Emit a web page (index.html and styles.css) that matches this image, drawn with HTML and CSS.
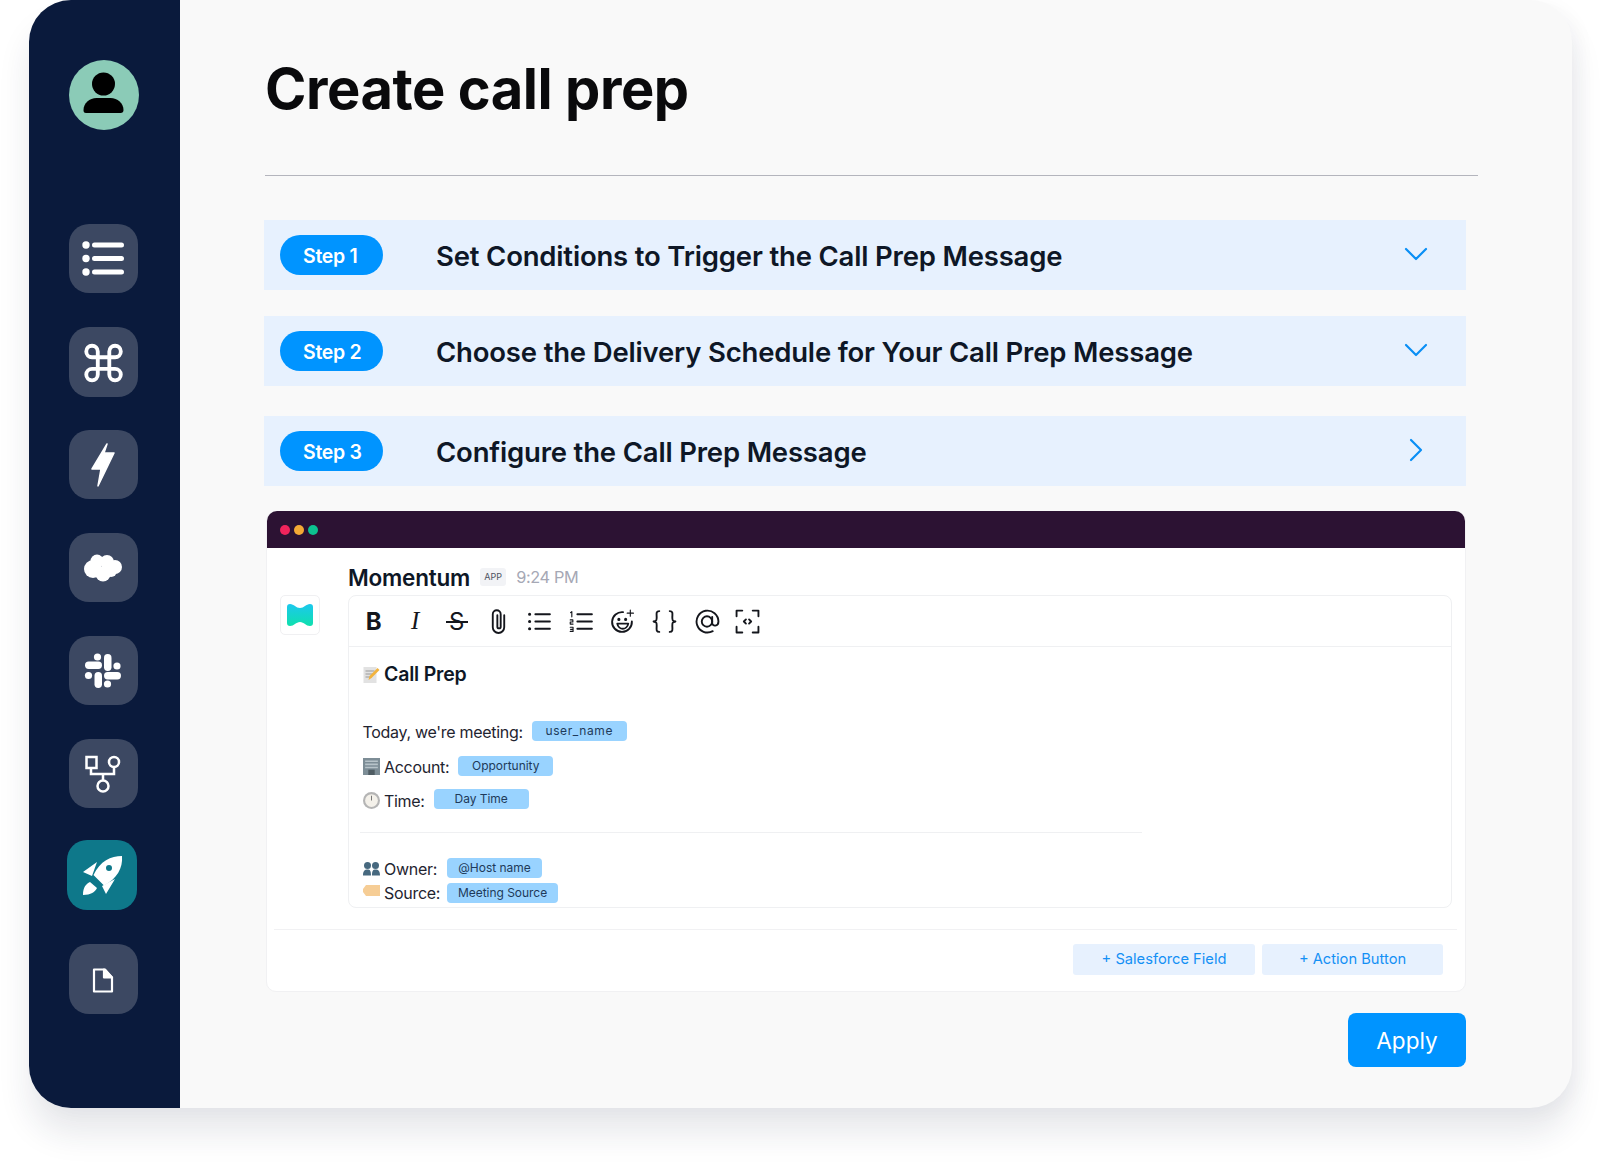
FILE: index.html
```html
<!DOCTYPE html>
<html lang="en">
<head>
<meta charset="utf-8">
<title>Create call prep</title>
<link rel="stylesheet" href="styles.css">
</head>
<body>
<div class="window">
  <aside class="sidebar">
    <svg class="avatar" viewBox="0 0 70 70"><circle cx="35" cy="35" r="35" fill="#8bcbb7"/><circle cx="34.500" cy="24" r="11.500"/><path d="M14.500 50c0-7 6-12 13-12h14c7 0 13 5 13 12 0 2-1 3-3 3H17c-2 0-2.500-1-2.500-3z"/></svg>
    <div class="nav-list">
      <div class="nav"><svg viewBox="0 0 69 69" fill="#fff"><circle cx="17" cy="21" r="3.700"/><circle cx="17" cy="34.500" r="3.700"/><circle cx="17" cy="48" r="3.700"/><path d="M25.500 21h27M25.500 34.500h27M25.500 48h27" stroke="#fff" stroke-width="5" stroke-linecap="round"/></svg></div>
      <div class="nav nav-cmd"><svg viewBox="-11.500 -12.500 69 69" fill="none" stroke="#fff" stroke-width="2" stroke-linecap="round" stroke-linejoin="round"><path transform="scale(1.920)" d="M18 3a3 3 0 0 0-3 3v12a3 3 0 0 0 3 3 3 3 0 0 0 3-3 3 3 0 0 0-3-3H6a3 3 0 0 0-3 3 3 3 0 0 0 3 3 3 3 0 0 0 3-3V6a3 3 0 0 0-3-3 3 3 0 0 0-3 3 3 3 0 0 0 3 3h12a3 3 0 0 0 3-3 3 3 0 0 0-3-3z"/></svg></div>
      <div class="nav"><svg viewBox="0 0 69 69" fill="#fff" stroke="#fff" stroke-width="1.500" stroke-linejoin="round"><path d="M38 14 23 39h9l-3 17 16-33H35z"/></svg></div>
      <div class="nav"><svg viewBox="0 0 69 69" fill="#fff"><circle cx="24" cy="36" r="9"/><circle cx="28" cy="28" r="6.500"/><circle cx="38" cy="29" r="7"/><circle cx="46" cy="34" r="7"/><circle cx="34" cy="41" r="7.500"/><circle cx="42" cy="38" r="6"/></svg></div>
      <div class="nav"><svg viewBox="0 0 69 69" fill="#fff"><rect x="16" y="25.500" width="17" height="7.500" rx="3.700"/><circle cx="28.500" cy="21" r="3.600"/><rect x="35" y="18" width="7.500" height="17" rx="3.700"/><circle cx="48" cy="30" r="3.600"/><rect x="35" y="36" width="17" height="7.500" rx="3.700"/><circle cx="19.500" cy="39.500" r="3.600"/><rect x="25.500" y="36" width="7.500" height="16" rx="3.700"/><circle cx="38.500" cy="48" r="3.600"/></svg></div>
      <div class="nav"><svg viewBox="0 0 69 69" fill="none" stroke="#fff" stroke-width="2.500"><rect x="17.500" y="18" width="10" height="11"/><circle cx="45" cy="23" r="5"/><circle cx="34" cy="47" r="5.500"/><path d="M22 29v6h23v-7M34 35v6.500"/></svg></div>
      <div class="nav nav-active"><svg viewBox="0 0 70 70" fill="#fff"><path fill-rule="evenodd" d="M55 16c-11 0-22 5-28.500 19L37 45.500C50 38.500 56 28 55 16zM45 28a3 3 0 1 0-6 0 3 3 0 0 0 6 0z"/><path d="M16 32l14-10-5 14zM48 39l-9 15-4-8zM16 55c0-8 3-11 7-13l7 6c-2 4-6 7-14 7z"/></svg></div>
      <div class="nav nav-last"><svg viewBox="0 0 69 69" fill="none" stroke="#fff" stroke-width="2.200" stroke-linejoin="round"><path d="M25 25h11l7 8v14H25z"/><path d="M35 25l8 8h-8z" fill="#fff"/></svg></div>
    </div>
  </aside>
  <main class="main">
    <h1 class="title">Create call prep</h1>
    <div class="rule"></div>
    <section class="step step-first">
      <span class="pill">Step 1</span>
      <span class="step-text">Set Conditions to Trigger the Call Prep Message</span>
      <svg class="chev" viewBox="0 0 24 24"><path d="M2 6l10 10L22 6"/></svg>
    </section>
    <section class="step step-second">
      <span class="pill">Step 2</span>
      <span class="step-text">Choose the Delivery Schedule for Your Call Prep Message</span>
      <svg class="chev" viewBox="0 0 24 24"><path d="M2 6l10 10L22 6"/></svg>
    </section>
    <section class="step step-third">
      <span class="pill">Step 3</span>
      <span class="step-text">Configure the Call Prep Message</span>
      <svg class="chev chev-right" viewBox="0 0 24 24"><path d="M7 2l10 10L7 22"/></svg>
    </section>
    <section class="card">
      <div class="titlebar"><i class="dot dot-red"></i><i class="dot dot-yellow"></i><i class="dot dot-green"></i></div>
      <div class="card-body">
        <div class="logo"><svg viewBox="0 0 26 22" width="26" height="22"><defs><linearGradient id="mg" x1="0" y1="0" x2="0" y2="1"><stop offset="0" stop-color="#1cc8ee"/><stop offset="1" stop-color="#0fe0ad"/></linearGradient></defs><path fill="url(#mg)" d="M3 0c4 0 6 4 10 4s6-4 10-4c2 0 3 1 3 3v16c0 2-1 3-3 3-4 0-6-4-10-4s-6 4-10 4c-2 0-3-1-3-3V3c0-2 1-3 3-3z"/></svg></div>
        <div class="message">
          <div class="msg-head"><span class="name">Momentum</span><span class="app">APP</span><span class="time">9:24 PM</span></div>
          <div class="editor">
            <div class="toolbar">
              <span class="tool tool-b">B</span>
              <span class="tool tool-i">I</span>
              <span class="tool tool-s">S</span>
              <span class="tool"><svg viewBox="0 0 24 24" class="ico"><path d="M17.500 6v11.500a5.500 5.500 0 0 1-11 0V5a3.800 3.800 0 0 1 7.600 0v12a1.600 1.600 0 0 1-3.200 0V6"/></svg></span>
              <span class="tool"><svg viewBox="0 0 24 24" class="ico"><path d="M8 5h14M8 12h14M8 19h14"/><path class="dotted" d="M2.500 5h.01M2.500 12h.01M2.500 19h.01"/></svg></span>
              <span class="tool"><svg viewBox="0 0 24 24" class="ico"><path d="M8 5h14M8 12h14M8 19h14"/><path class="thin" d="M1.500 3.500l1.200-1v5M1.200 10.500h2.500v2h-2.500v2h2.700M1.200 17.500h2.700v4h-2.700M1.500 19.500h2.400"/></svg></span>
              <span class="tool"><svg viewBox="0 0 24 24" class="ico"><path d="M21 12a9.500 9.500 0 1 1-8.500-9"/><path class="dotted" d="M8.500 10h.01M15 10h.01"/><path d="M7 14h10.500c-.5 3-3 5-5.250 5S7.500 17 7 14z"/><path class="thin" d="M19.500 1v6M16.500 4h6"/></svg></span>
              <span class="tool"><svg viewBox="0 0 24 24" class="ico"><path d="M7 2C3.500 2 4.500 5 4.500 8S4.500 11 1.500 12c3 1 3 1 3 4s-1 6 2.500 6M17 2c3.500 0 2.500 3 2.500 6s0 3 3 4c-3 1-3 1-3 4s1 6-2.500 6"/></svg></span>
              <span class="tool"><svg viewBox="0 0 24 24" class="ico ico-shift"><circle cx="11.500" cy="12" r="5"/><path d="M16.500 7.500v6c0 3.500 6 3.500 6-1.500a10.500 10.500 0 1 0-5.500 9.300"/></svg></span>
              <span class="tool"><svg viewBox="0 0 24 24" class="ico"><path d="M7 1.500H1.500V7M17 1.500h5.500V7M7 22.500H1.500V17M17 22.500h5.500V17M10.500 10 8.500 12l2 2M13.500 10l2 2-2 2"/></svg></span>
            </div>
            <div class="editor-body">
              <div class="line line-heading">
                <svg class="emoji" viewBox="0 0 16 17"><rect x="0" y="1" width="13" height="16" fill="#e2e2e2"/><path d="M2 5h9M2 8h9M2 11h6" stroke="#9a9a9a"/><path d="M5 14l1-4 8-8 2 2-8 8z" fill="#f2b33d"/></svg>
                <b class="heading">Call Prep</b>
              </div>
              <div class="line line-today"><span class="label">Today, we're meeting:</span><span class="chip chip-name">user_name</span></div>
              <div class="line line-account">
                <svg class="emoji" viewBox="0 0 16 16"><rect width="16" height="16" fill="#7d8d96"/><path d="M2 3h12M2 6h12M2 9h12" stroke="#b7c3c9" stroke-width="1.500"/><rect x="5" y="11" width="6" height="5" fill="#4f5c63"/></svg>
                <span class="label">Account:</span><span class="chip">Opportunity</span>
              </div>
              <div class="line line-time">
                <svg class="emoji" viewBox="0 0 16 16"><circle cx="8" cy="8" r="8" fill="#b5b5b5"/><circle cx="8" cy="8" r="6" fill="#f4f1ea"/><path d="M8 3.500V8" stroke="#777"/></svg>
                <span class="label">Time:</span><span class="chip chip-up">Day Time</span>
              </div>
              <div class="hr"></div>
              <div class="line line-owner">
                <svg class="emoji" viewBox="0 0 17 14" fill="#47697f"><circle cx="4.500" cy="4" r="3.500"/><circle cx="12.500" cy="4" r="3.500"/><path d="M0 14c0-5 2-6 4.500-6S8 9 8 14zM9 14c0-5 1-6 3.500-6S17 9 17 14z"/></svg>
                <span class="label label-owner">Owner:</span><span class="chip chip-mid">@Host name</span>
              </div>
              <div class="line line-source">
                <svg class="emoji emoji-up" viewBox="0 0 17 11"><path d="M3 0h14v11H3L0 7V4z" fill="#f6cd95"/></svg>
                <span class="label label-source">Source:</span><span class="chip chip-wide">Meeting Source</span>
              </div>
            </div>
          </div>
        </div>
      </div>
      <div class="sep"></div>
      <div class="card-actions"><span class="add add-first">+ Salesforce Field</span><span class="add">+ Action Button</span></div>
    </section>
    <div class="apply-row"><button class="apply">Apply</button></div>
  </main>
</div>
</body>
</html>
```

FILE: styles.css
```css
* { box-sizing: border-box; }
html, body { margin: 0; padding: 0; background: #fff; }
body { width: 1600px; height: 1165px; overflow: hidden; font-family: Inter, "Liberation Sans", sans-serif; color: #0e1726; }

.window { display: flex; width: 1543px; height: 1108px; margin-left: 29px; border-radius: 42px; background: #f9f9f9; box-shadow: 0 26px 32px rgba(30, 40, 70, .10), 8px 4px 18px rgba(30, 40, 70, .03); }

.sidebar { flex: 0 0 151px; background: #0a1a3c; border-radius: 42px 0 0 42px; padding: 60px 0 0 39.500px; }
.avatar { display: block; width: 70px; height: 70px; }
.nav-list { display: flex; flex-direction: column; gap: 34px; margin-top: 94px; }
.nav { width: 69px; height: 69px; border-radius: 20px; background: #3c4862; }
.nav svg { display: block; width: 100%; height: 100%; }
.nav-cmd { height: 70px; margin-bottom: -1px; }
.nav-active { width: 70px; height: 70px; margin: -2px 0 0 -2px; background: #0e788a; }
.nav-last { height: 70px; }

.main { flex: 1; padding: 60px 0 0 86px; }
.title { margin: 0 0 0 -1px; font-size: 56px; line-height: 58px; font-weight: 700; letter-spacing: -.45px; color: #0a0a0c; }
.rule { width: 1213px; height: 1px; margin: 57px 0 0 -1px; background: #b4b5bd; }

.step { display: flex; align-items: center; width: 1202px; height: 70px; margin-left: -2px; background: #e7f1fe; padding: 0 38px 0 16px; }
.step-first { margin-top: 44px; }
.step-second { margin-top: 26px; }
.step-third { margin-top: 30px; }
.pill { width: 103px; height: 40px; flex: none; border-radius: 20px; background: #0094ff; color: #fff; font-size: 19.500px; font-weight: 600; line-height: 42px; padding-left: 23px; letter-spacing: -.3px; }
.step-text { flex: 1; margin-left: 53px; padding-top: 2px; font-size: 27.500px; font-weight: 600; letter-spacing: -.18px; color: #0e1726; }
.chev { width: 24px; height: 24px; flex: none; margin-top: -1px; fill: none; stroke: #0a8ff5; stroke-width: 2.200; stroke-linecap: round; stroke-linejoin: round; }
.chev-right { margin-top: -3px; }

.card { width: 1200px; height: 481px; margin-top: 25px; background: #fff; border: 1px solid #f1f1f3; border-radius: 10px; }
.titlebar { display: flex; align-items: center; gap: 4px; height: 37px; margin: -1px 0 0; padding-left: 13px; background: #2c1233; border-radius: 10px 10px 0 0; }
.dot { width: 10px; height: 10px; border-radius: 50%; }
.dot-red { background: #f0245c; }
.dot-yellow { background: #f4a935; }
.dot-green { background: #0cc18f; }

.card-body { display: flex; }
.logo { display: flex; align-items: center; justify-content: center; flex: none; width: 40px; height: 40px; margin: 47px 0 0 13px; border: 1px solid #f0f0f2; border-radius: 5px; }
.message { margin-left: 28px; }
.msg-head { display: flex; align-items: center; height: 28px; margin-top: 15px; margin-bottom: 4px; }
.name { font-size: 22.500px; font-weight: 600; letter-spacing: -.2px; color: #0e1726; }
.app { width: 26px; height: 18px; margin-left: 10px; border-radius: 3px; background: #f2f3f6; color: #4c5260; font-size: 9px; line-height: 18px; text-align: center; }
.time { margin-left: 10px; font-size: 16.300px; color: #a6a8b5; letter-spacing: -.35px; }

.editor { width: 1104px; height: 313px; border: 1px solid #eff0f2; border-radius: 8px; }
.toolbar { display: flex; align-items: center; height: 51px; padding-left: 4px; border-bottom: 1px solid #eff0f2; }
.tool { display: flex; align-items: center; justify-content: center; flex: none; width: 41.500px; height: 26px; color: #14161c; }
.tool-b { font-size: 24px; font-weight: 700; }
.tool-i { font-family: "Liberation Serif", serif; font-style: italic; font-size: 25px; }
.tool-s { position: relative; font-size: 24px; }
.tool-s::after { content: ""; position: absolute; left: 10px; right: 10px; top: 13px; height: 2px; background: #14161c; }
.ico { width: 25px; height: 25px; fill: none; stroke: #14161c; stroke-width: 1.800; stroke-linecap: round; stroke-linejoin: round; }
.ico-shift { margin-left: 3px; }
.ico .dotted { stroke-width: 3; }
.ico .thin { stroke-width: 1.100; }

.editor-body { padding: 13px 0 0 13.500px; }
.line { display: flex; align-items: center; height: 24px; }
.line-heading { height: 28px; }
.line-today { margin-top: 31px; }
.line-account { margin-top: 11px; }
.line-time { margin-top: 10px; }
.line-owner { margin-top: 23px; }
.emoji { width: 17px; height: 17px; flex: none; margin-right: 4.500px; }
.emoji-up { margin-bottom: 4px; }
.heading { font-size: 19.500px; font-weight: 600; letter-spacing: -.2px; }
.label { font-size: 16px; color: #1f2430; letter-spacing: -.3px; margin-right: 9px; padding-top: 2px; }
.label-owner { margin-right: 10px; }
.label-source { margin-right: 7px; }
.chip { min-width: 95px; height: 20px; padding: 0 8px; border-radius: 4px; background: #99d3ff; color: #1e3a5a; font-size: 12px; line-height: 20px; text-align: center; letter-spacing: -.03px; }
.chip-name { letter-spacing: .6px; }
.chip-up { margin-top: -2px; }
.chip-mid { margin-top: -1px; }
.chip-wide { min-width: 111px; margin-top: 2px; }
.hr { width: 782px; height: 1px; margin: 20px 0 0 -3px; background: #eff0f2; }

.sep { height: 1px; margin: 21px 8px 0 7px; background: #f1f1f3; }
.card-actions { display: flex; justify-content: flex-end; gap: 7px; margin-top: 14px; padding-right: 22px; }
.add { width: 181px; height: 31px; border-radius: 3px; background: #e7f1fe; color: #1490f5; font-size: 14.700px; line-height: 31px; text-align: center; }
.add-first { width: 182px; }

.apply-row { display: flex; justify-content: flex-end; width: 1200px; margin-top: 21px; }
.apply { width: 118px; height: 54px; border: 0; border-radius: 8px; background: #0094ff; color: #fff; font-family: Inter, "Liberation Sans", sans-serif; font-size: 22.500px; }
```
